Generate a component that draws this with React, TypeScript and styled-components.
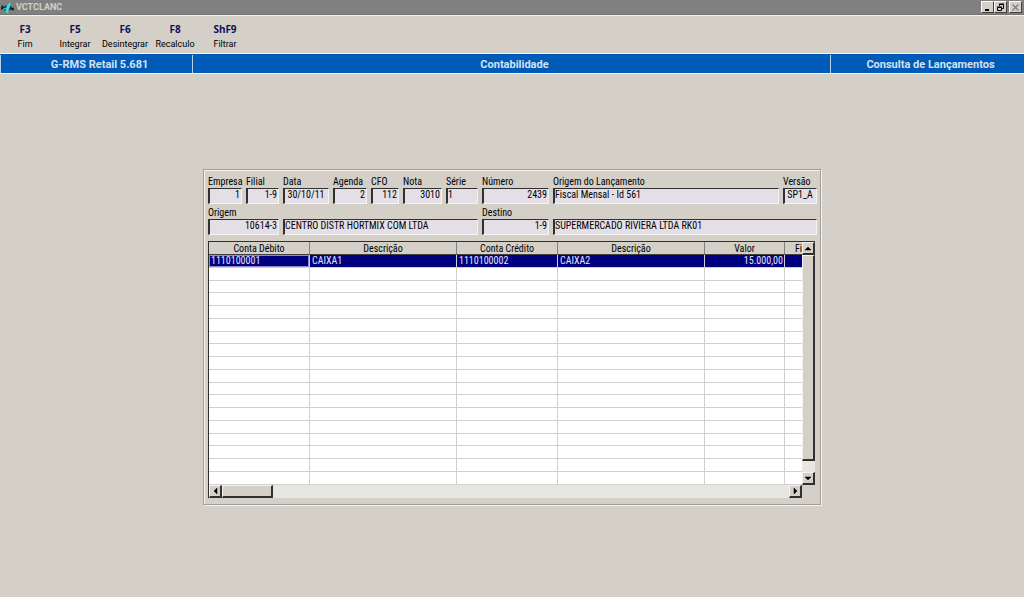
import React from "react";
import styled, { createGlobalStyle, css } from "styled-components";

const narrow = `"Roboto Condensed", "Lato", sans-serif`;

const GlobalStyle = createGlobalStyle`
  *, *::before, *::after { box-sizing: border-box; }
  body {
    margin: 0;
    background: #d4d0c8;
    color: #000;
    font: 10px/13px ${narrow};
  }
  button, input { font: inherit; color: inherit; }
`;

const Window = styled.div`
  min-height: 100vh;
  background: #d4d0c8;
`;

const TitleBar = styled.header`
  display: flex;
  align-items: center;
  gap: 2px;
  height: 15px;
  padding: 0 2px 0 1px;
  background: #808080;
  border-bottom: 1px solid #747474;
`;

const Title = styled.h1`
  flex: 1;
  margin: 0;
  color: #d4d0c8;
  font: bold 9px/13px "Roboto", sans-serif;
`;

const WindowButtons = styled.div`
  display: flex;
`;

const WindowButton = styled.button<{ $apart?: boolean }>`
  display: grid;
  place-items: center;
  width: 13px;
  height: 12px;
  margin-left: ${(p) => (p.$apart ? 2 : 0)}px;
  padding: 0;
  background: #d4d0c8;
  border: 1px solid;
  border-color: #fff #404040 #404040 #fff;
`;

const Toolbar = styled.nav`
  display: flex;
  height: 38px;
  padding-top: 6px;
  border-top: 1px solid #f2f1ee;
`;

const Tool = styled.button`
  display: flex;
  flex-direction: column;
  align-items: center;
  gap: 1px;
  width: 50px;
  padding: 0;
  border: 0;
  background: none;
  white-space: nowrap;
  font: 9px/14px "Roboto", sans-serif;
`;

const Shortcut = styled.span`
  color: #10105c;
  font: bold 10px/14px "Noto Sans", sans-serif;
`;

const Banner = styled.div`
  display: grid;
  grid-template-columns: 192px 1fr 194px;
  height: 21px;
  padding: 1px 0;
  background: #005bb8;
  border-top: 1px solid #eef4f8;
  border-bottom: 1px solid #eef4f8;
`;

const BannerCell = styled.div`
  display: grid;
  place-items: center;
  padding: 1px 0 0 6px;
  color: #d3e2f2;
  font: bold 11px/17px "Roboto", sans-serif;
  border-left: 1px solid #b8d0e8;
`;

const Main = styled.main`
  display: flex;
  justify-content: center;
  padding: 95px 16px 16px;
`;

const Panel = styled.section`
  width: 618px;
  max-width: 100%;
  padding: 5px 3px 6px 4px;
  border: 1px solid #a09e98;
  box-shadow: inset 1px 1px #f4f3f0, 1px 1px #f4f3f0;
`;

const Fields = styled.form`
  display: grid;
  grid-template-columns: 34px 33px 46px 34px 28px 39px 32px 67px minmax(0, 1fr) 34px;
  gap: 2px 4px;
  align-items: end;
`;

const Field = styled.label<{ $span?: number }>`
  display: flex;
  flex-direction: column;
  min-width: 0;
  grid-column: span ${(p) => p.$span ?? 1};
  white-space: nowrap;
`;

const Box = styled.input<{ $align?: string }>`
  width: 100%;
  height: 16px;
  padding: 0 1px 3px 0;
  background: #e4dfe6;
  border: 1px solid;
  border-color: #303030 #f4f2f2 #f4f2f2 #303030;
  border-left-width: 2px;
  border-radius: 0;
  outline: 0;
  text-align: ${(p) => p.$align ?? "left"};
`;

const Grid = styled.div`
  display: grid;
  grid-template-columns: minmax(0, 1fr) 13px;
  margin-top: 6px;
  width: 607px;
  max-width: 100%;
  border-left: 1px solid #303030;
  border-top: 1px solid #303030;
`;

const TableArea = styled.div`
  overflow: hidden;
  background: #fff;
`;

const Table = styled.table`
  width: 100%;
  height: 243px;
  table-layout: fixed;
  border-collapse: separate;
  border-spacing: 0;
  line-height: 11px;
`;

const Head = styled.th`
  height: 13px;
  padding: 0;
  background: #d4d0c8;
  border-right: 1px solid #808080;
  border-bottom: 1px solid #404040;
  font-weight: normal;
  white-space: nowrap;
  overflow: hidden;
  &:last-child { border-right: 0; text-align: right; }
`;

const Cell = styled.td<{ $right?: boolean; $focus?: boolean }>`
  height: 12px;
  padding: 0 1px 0 2px;
  border-right: 1px solid #d0d0d0;
  border-bottom: 1px solid #d0d0d0;
  text-align: ${(p) => (p.$right ? "right" : "left")};
  ${(p) => p.$focus && css`box-shadow: inset 0 0 0 1px #8c8cc8;`}
  &:last-child { border-right: 0; }
`;

const Row = styled.tr<{ $selected?: boolean }>`
  ${(p) => p.$selected && css`
    background: #000080;
    color: #e6e6f4;
  `}
`;

const ScrollTrack = styled.div<{ $horizontal?: boolean }>`
  display: flex;
  flex-direction: ${(p) => (p.$horizontal ? "row" : "column")};
  justify-content: space-between;
  background: #e8e6e2;
`;

const ScrollGroup = styled.div<{ $horizontal?: boolean }>`
  display: flex;
  flex-direction: ${(p) => (p.$horizontal ? "row" : "column")};
`;

const raised = css`
  padding: 0;
  background: #d4d0c8;
  border: 1px solid;
  border-color: #f4f3f0 #303030 #303030 #f4f3f0;
  border-width: 1px 2px 2px 1px;
`;

const ScrollButton = styled.button`
  ${raised}
  display: grid;
  place-items: center;
  width: 13px;
  height: 13px;
`;

const Thumb = styled.div<{ $horizontal?: boolean }>`
  ${raised}
  width: ${(p) => (p.$horizontal ? "51px" : "13px")};
  height: ${(p) => (p.$horizontal ? "13px" : "206px")};
`;

const Corner = styled.div`
  background: #d4d0c8;
`;

const arrows = {
  up: "M0 5 3 2 6 5z",
  down: "M0 2 6 2 3 5z",
  left: "M2 3 5 0 5 6z",
  right: "M2 0 5 3 2 6z",
};

const Arrow = ({ dir }: { dir: keyof typeof arrows }) => (
  <svg width="7" height="7" viewBox="0 0 7 7" aria-hidden="true">
    <path d={arrows[dir]} fill="#000" stroke="#000" strokeWidth=".5" />
  </svg>
);

const AppLogo = () => (
  <svg width="13" height="13" viewBox="0 0 13 13" aria-hidden="true">
    <path d="M0 8.5 1.5 6l2 2L5 6l2 2 2-2 1.5 2H13" fill="none" stroke="#102c30" strokeWidth="2.4" />
    <path d="M5 7 7 3 10 1.500 9 6 7.500 9 7 12.500 5 11z" fill="#38e0e0" />
    <path d="M2 8.500 5 7" stroke="#30d8d8" strokeWidth="1.200" />
  </svg>
);

const tools = [
  ["F3", "Fim"],
  ["F5", "Integrar"],
  ["F6", "Desintegrar"],
  ["F8", "Recalculo"],
  ["ShF9", "Filtrar"],
];

type FieldData = { label?: string; name?: string; value: string; align?: string; span?: number };

const fields: FieldData[] = [
  { label: "Empresa", value: "1", align: "right" },
  { label: "Filial", value: "1-9", align: "right" },
  { label: "Data", value: "30/10/11", align: "center" },
  { label: "Agenda", value: "2", align: "right" },
  { label: "CFO", value: "112", align: "right" },
  { label: "Nota", value: "3010", align: "right" },
  { label: "Série", value: "1" },
  { label: "Número", value: "2439", align: "right" },
  { label: "Origem do Lançamento", value: "Fiscal Mensal - Id 561" },
  { label: "Versão", value: "SP1_A", align: "center" },
  { label: "Origem", value: "10614-3", align: "right", span: 2 },
  { name: "Nome da origem", value: "CENTRO DISTR HORTMIX COM LTDA", span: 5 },
  { label: "Destino", value: "1-9", align: "right" },
  { name: "Nome do destino", value: "SUPERMERCADO RIVIERA LTDA RK01", span: 2 },
];

const columns = [
  { title: "Conta Débito", width: 101 },
  { title: "Descrição", width: 147 },
  { title: "Conta Crédito", width: 101 },
  { title: "Descrição", width: 147 },
  { title: "Valor", width: 80 },
  { title: "Fi" },
];

const entries = [["1110100001", "CAIXA1", "1110100002", "CAIXA2", "15.000,00", ""]];
const blankRows = Array.from({ length: 17 }, () => ["", "", "", "", "", ""]);

export default function App() {
  return (
    <Window>
      <GlobalStyle />
      <TitleBar>
        <AppLogo />
        <Title>VCTCLANC</Title>
        <WindowButtons>
          <WindowButton aria-label="Minimizar">
            <svg width="9" height="9" viewBox="0 0 9 9"><path d="M2 6h4v2H2z" /></svg>
          </WindowButton>
          <WindowButton aria-label="Restaurar">
            <svg width="9" height="9" viewBox="0 0 9 9" fill="none" stroke="#000">
              <path d="M3.500 3V1.500h4v4H6M3 1h5M1.500 4.500h4v3h-4zM1 4h5" />
            </svg>
          </WindowButton>
          <WindowButton aria-label="Fechar" $apart>
            <svg width="9" height="9" viewBox="0 0 9 9" stroke="#808080" strokeWidth="1.300">
              <path d="M1.500 1.500l6 6M7.500 1.500l-6 6" />
            </svg>
          </WindowButton>
        </WindowButtons>
      </TitleBar>
      <Toolbar>
        {tools.map(([key, text]) => (
          <Tool key={key}>
            <Shortcut>{key}</Shortcut>
            {text}
          </Tool>
        ))}
      </Toolbar>
      <Banner>
        <BannerCell>G-RMS Retail 5.681</BannerCell>
        <BannerCell>Contabilidade</BannerCell>
        <BannerCell>Consulta de Lançamentos</BannerCell>
      </Banner>
      <Main>
        <Panel>
          <Fields>
            {fields.map((f) => (
              <Field key={f.label ?? f.name} $span={f.span}>
                {f.label}
                <Box readOnly aria-label={f.name} defaultValue={f.value} $align={f.align} />
              </Field>
            ))}
          </Fields>
          <Grid>
            <TableArea>
              <Table>
                <colgroup>
                  {columns.map((c, i) => (
                    <col key={i} width={c.width} />
                  ))}
                </colgroup>
                <thead>
                  <tr>
                    {columns.map((c, i) => (
                      <Head key={i}>{c.title}</Head>
                    ))}
                  </tr>
                </thead>
                <tbody>
                  {[...entries, ...blankRows].map((row, r) => (
                    <Row key={r} $selected={r === 0}>
                      {row.map((value, c) => (
                        <Cell key={c} $right={c === 4} $focus={r === 0 && c === 0}>
                          {value}
                        </Cell>
                      ))}
                    </Row>
                  ))}
                </tbody>
              </Table>
            </TableArea>
            <ScrollTrack>
              <ScrollGroup>
                <ScrollButton aria-label="Rolar para cima"><Arrow dir="up" /></ScrollButton>
                <Thumb />
              </ScrollGroup>
              <ScrollButton aria-label="Rolar para baixo"><Arrow dir="down" /></ScrollButton>
            </ScrollTrack>
            <ScrollTrack $horizontal>
              <ScrollGroup $horizontal>
                <ScrollButton aria-label="Rolar para a esquerda"><Arrow dir="left" /></ScrollButton>
                <Thumb $horizontal />
              </ScrollGroup>
              <ScrollButton aria-label="Rolar para a direita"><Arrow dir="right" /></ScrollButton>
            </ScrollTrack>
            <Corner />
          </Grid>
        </Panel>
      </Main>
    </Window>
  );
}
